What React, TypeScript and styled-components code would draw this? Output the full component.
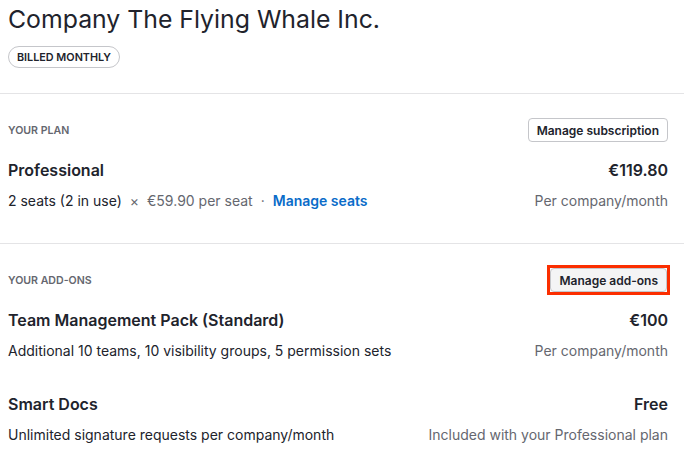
import React from 'react'
import styled, { createGlobalStyle } from 'styled-components'

const GlobalStyle = createGlobalStyle`
  body {
    margin: 0;
    background: #ffffff;
    font-family: Inter, 'Noto Sans', sans-serif;
    color: #21232c;
  }
`

const Page = styled.div`
  width: 684px;
  height: 458px;
  overflow: hidden;
`

const Header = styled.header`
  padding: 4px 16px 25px 8px;
  display: flex;
  flex-direction: column;
  align-items: flex-start;
  gap: 12px;
`

const Title = styled.h1`
  margin: 0;
  font-size: 24.8px;
  font-weight: 400;
  line-height: 30px;
  letter-spacing: 0;
`

const Badge = styled.span`
  display: inline-flex;
  align-items: center;
  height: 22px;
  padding: 0 8px;
  border: 1px solid #c5c6ca;
  border-radius: 12px;
  font-size: 10.8px;
  font-weight: 600;
  text-transform: uppercase;
  box-sizing: border-box;
`

const Section = styled.section`
  border-top: 1px solid #e4e4e6;
  padding: 24px 16px 32px 8px;
`

const SectionHead = styled.div`
  display: flex;
  justify-content: space-between;
  align-items: center;
  height: 24px;
  margin-bottom: 18px;
`

const Label = styled.span`
  font-size: 10.6px;
  font-weight: 600;
  color: #65676f;
  text-transform: uppercase;
`

const Button = styled.button`
  font-family: inherit;
  height: 24px;
  padding: 0 8px;
  font-size: 12px;
  font-weight: 600;
  color: #21232c;
  background: #ffffff;
  border: 1px solid #c5c6ca;
  border-radius: 4px;
`

const FocusedButton = styled(Button)`
  background: #f4f4f5;
`

const Highlight = styled.span`
  display: inline-flex;
  border: 3px solid #fb2e00;
  margin-right: -2px;
`

const Item = styled.div`
  display: grid;
  grid-template-columns: 1fr auto;
  row-gap: 11px;
  & + & {
    margin-top: 33px;
  }
`

const Name = styled.div`
  font-size: 16px;
  font-weight: 600;
  line-height: 20px;
`

const Price = styled(Name)`
  text-align: right;
`

const Detail = styled.div`
  font-size: 14px;
  line-height: 20px;
  color: #21232c;
`

const Muted = styled.span`
  color: #65676f;
`

const Sep = styled.span`
  color: #65676f;
  margin: 0 8px;
`

const Link = styled.a`
  color: #0a6cc9;
  font-weight: 600;
  text-decoration: none;
`

const Note = styled.div`
  font-size: 14px;
  line-height: 20px;
  color: #65676f;
  text-align: right;
`

export default function App() {
  return (
    <Page>
      <GlobalStyle />
      <Header>
        <Title>Company The Flying Whale Inc.</Title>
        <Badge>Billed monthly</Badge>
      </Header>
      <Section>
        <SectionHead>
          <Label>Your plan</Label>
          <Button>Manage subscription</Button>
        </SectionHead>
        <Item>
          <Name>Professional</Name>
          <Price>€119.80</Price>
          <Detail>
            2 seats (2 in use)
            <Sep>×</Sep>
            <Muted>€59.90 per seat</Muted>
            <Sep>·</Sep>
            <Link href="#">Manage seats</Link>
          </Detail>
          <Note>Per company/month</Note>
        </Item>
      </Section>
      <Section>
        <SectionHead>
          <Label>Your add-ons</Label>
          <Highlight>
            <FocusedButton>Manage add-ons</FocusedButton>
          </Highlight>
        </SectionHead>
        <Item>
          <Name>Team Management Pack (Standard)</Name>
          <Price>€100</Price>
          <Detail>Additional 10 teams, 10 visibility groups, 5 permission sets</Detail>
          <Note>Per company/month</Note>
        </Item>
        <Item>
          <Name>Smart Docs</Name>
          <Price>Free</Price>
          <Detail>Unlimited signature requests per company/month</Detail>
          <Note>Included with your Professional plan</Note>
        </Item>
      </Section>
    </Page>
  )
}
